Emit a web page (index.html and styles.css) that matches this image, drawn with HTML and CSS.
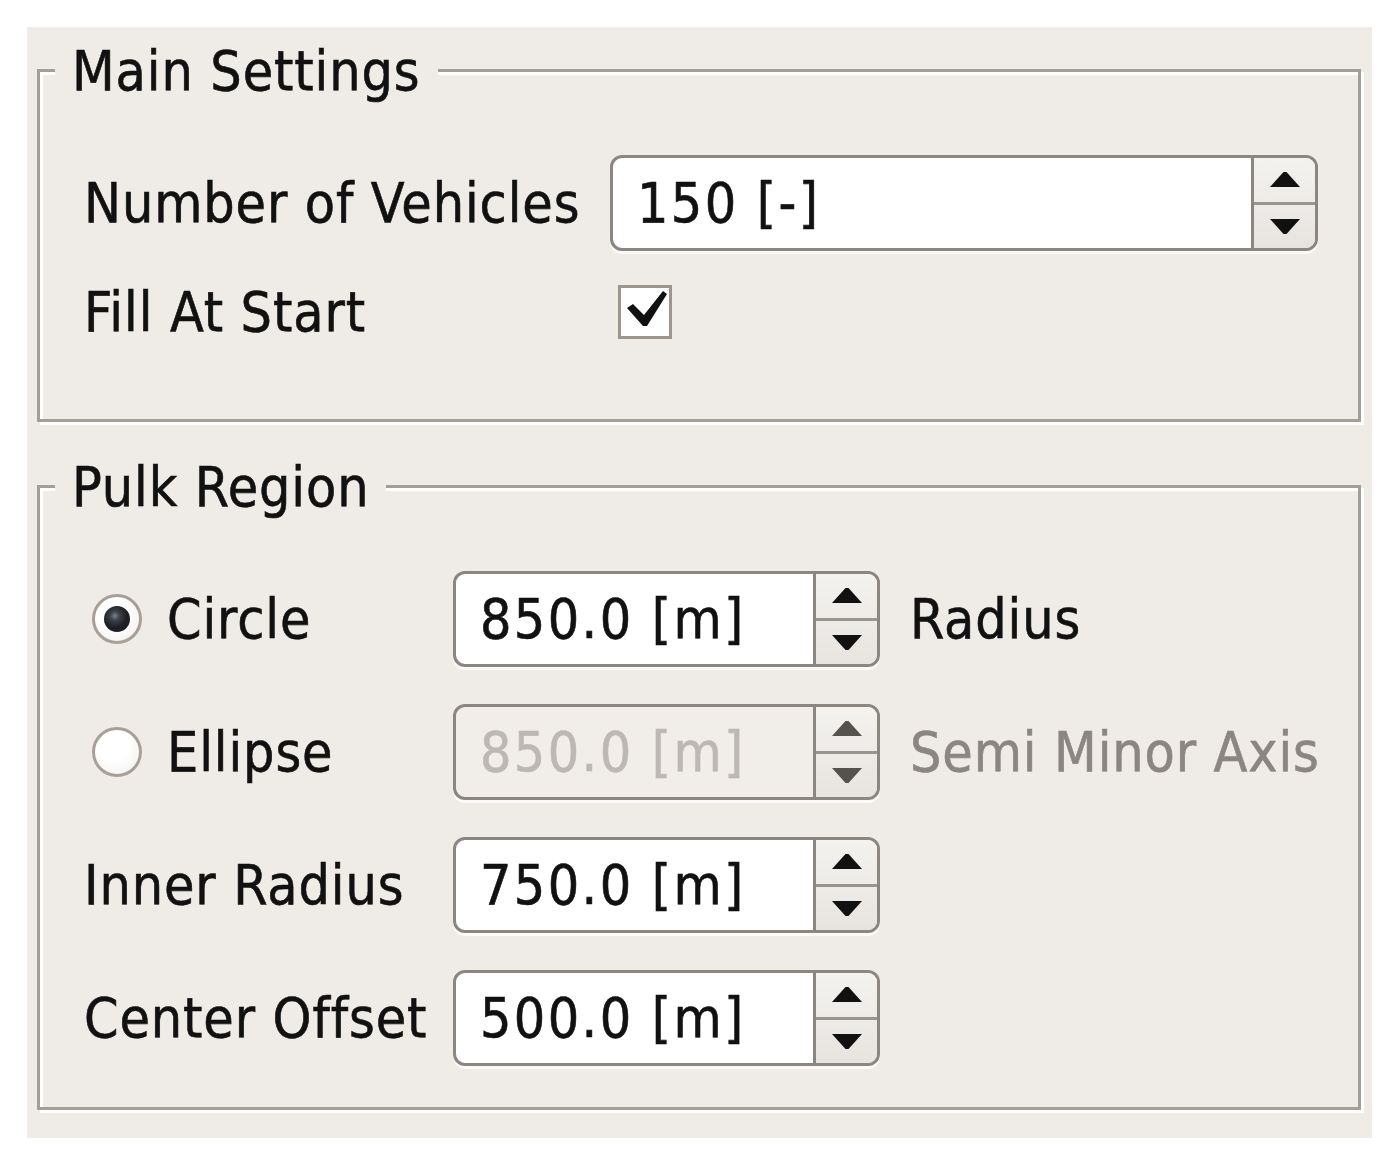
FILE: index.html
```html
<!DOCTYPE html>
<html lang="en">
<head>
    <meta charset="UTF-8">
    <meta name="viewport" content="width=device-width, initial-scale=1.0">
    <title>Pulk Settings</title>
    <link rel="stylesheet" href="styles.css">
</head>
<body>
    <div class="panel">

        <div class="group group-main">
            <div class="group-title">Main Settings</div>
            <div class="form form-main">
                <label class="field-label">Number of Vehicles</label>
                <div class="spinbox">
                    <div class="spin-value">150 [-]</div>
                    <div class="spin-buttons">
                        <div class="spin-btn"><svg class="arrow" viewBox="0 0 32 17"><polygon points="1,16 31,16 17.5,1 14.5,1"/></svg></div>
                        <div class="spin-btn"><svg class="arrow" viewBox="0 0 32 17"><polygon points="1,1 31,1 17.5,16 14.5,16"/></svg></div>
                    </div>
                </div>

                <label class="field-label">Fill At Start</label>
                <div class="checkbox-cell">
                    <span class="checkbox">
                        <svg class="check" viewBox="0 0 48 48"><path d="M6 20 L12 16 L23 27 L42 3 L46 6 L26 38 L22 38 Z"/></svg>
                    </span>
                </div>
            </div>
        </div>

        <div class="group group-region">
            <div class="group-title">Pulk Region</div>
            <div class="form form-region">
                <div class="radio-label"><span class="radio radio-checked"></span>Circle</div>
                <div class="spinbox">
                    <div class="spin-value">850.0 [m]</div>
                    <div class="spin-buttons">
                        <div class="spin-btn"><svg class="arrow" viewBox="0 0 32 17"><polygon points="1,16 31,16 17.5,1 14.5,1"/></svg></div>
                        <div class="spin-btn"><svg class="arrow" viewBox="0 0 32 17"><polygon points="1,1 31,1 17.5,16 14.5,16"/></svg></div>
                    </div>
                </div>
                <div class="suffix">Radius</div>

                <div class="radio-label"><span class="radio"></span>Ellipse</div>
                <div class="spinbox spinbox-disabled">
                    <div class="spin-value">850.0 [m]</div>
                    <div class="spin-buttons">
                        <div class="spin-btn"><svg class="arrow" viewBox="0 0 32 17"><polygon points="1,16 31,16 17.5,1 14.5,1"/></svg></div>
                        <div class="spin-btn"><svg class="arrow" viewBox="0 0 32 17"><polygon points="1,1 31,1 17.5,16 14.5,16"/></svg></div>
                    </div>
                </div>
                <div class="suffix suffix-disabled">Semi Minor Axis</div>

                <label class="field-label">Inner Radius</label>
                <div class="spinbox">
                    <div class="spin-value">750.0 [m]</div>
                    <div class="spin-buttons">
                        <div class="spin-btn"><svg class="arrow" viewBox="0 0 32 17"><polygon points="1,16 31,16 17.5,1 14.5,1"/></svg></div>
                        <div class="spin-btn"><svg class="arrow" viewBox="0 0 32 17"><polygon points="1,1 31,1 17.5,16 14.5,16"/></svg></div>
                    </div>
                </div>
                <div></div>

                <label class="field-label">Center Offset</label>
                <div class="spinbox">
                    <div class="spin-value">500.0 [m]</div>
                    <div class="spin-buttons">
                        <div class="spin-btn"><svg class="arrow" viewBox="0 0 32 17"><polygon points="1,16 31,16 17.5,1 14.5,1"/></svg></div>
                        <div class="spin-btn"><svg class="arrow" viewBox="0 0 32 17"><polygon points="1,1 31,1 17.5,16 14.5,16"/></svg></div>
                    </div>
                </div>
                <div></div>
            </div>
        </div>

    </div>
</body>
</html>
```

FILE: styles.css
```css
body {
    margin: 0;
    background-color: #fff;
    color: #111;
    font-family: "DejaVu Sans Condensed", "DejaVu Sans", sans-serif;
    font-stretch: condensed;
    font-size: 55px;
    letter-spacing: 0.9px;
    -webkit-text-stroke: 0.6px currentColor;
}

.panel {
    margin: 27px 0 0 27px;
    width: 1345px;
    box-sizing: border-box;
    padding: 42px 11px 28px 10px;
    background-color: #efebe6;
}

.group {
    border: 3px solid #a39e98;
    box-shadow: inset 3px 3px 0 #fff, 3px 3px 0 #fff;
    padding: 0 40px 77px 44px;
}

.group-region {
    margin-top: 63px;
    padding-bottom: 41px;
}

.group-title {
    width: fit-content;
    margin: -31px 0 0 -29px;
    padding: 0 17px;
    line-height: 60px;
    background-color: #efebe6;
    white-space: nowrap;
}

.form {
    display: grid;
    align-items: center;
    margin-top: 54px;
}

.form-main {
    grid-template-columns: 526px 708px;
    row-gap: 31px;
}

.form-region {
    grid-template-columns: 369px 427px 1fr;
    row-gap: 37px;
}

.field-label,
.suffix {
    line-height: 60px;
    white-space: nowrap;
}

.suffix {
    padding-left: 30px;
}

.suffix-disabled {
    color: #8b8680;
}

/* spin box */
.spinbox {
    display: flex;
    height: 96px;
    box-sizing: border-box;
    border: 3px solid #8c8680;
    border-radius: 12px;
    background-color: #fff;
    overflow: hidden;
    box-shadow: 0 3px 0 #fbfaf8;
}

.spin-value {
    flex: 1;
    display: flex;
    align-items: center;
    padding-left: 24px;
    letter-spacing: 2.4px;
    white-space: nowrap;
}

.spin-buttons {
    width: 64px;
    box-sizing: border-box;
    border-left: 3px solid #8c8680;
    display: flex;
    flex-direction: column;
    background: linear-gradient(#f4f2ef, #e7e4e0);
}

.spin-btn {
    flex: 1;
    display: flex;
    align-items: center;
    justify-content: center;
}

.spin-btn + .spin-btn {
    border-top: 3px solid #9a948e;
}

.arrow {
    width: 32px;
    height: 17px;
    fill: #111;
}

.spinbox-disabled {
    background-color: #f1eeea;
    color: #bdb8b2;
}

.spinbox-disabled .arrow {
    fill: #55524e;
}

/* check box */
.checkbox-cell {
    display: flex;
    padding-left: 8px;
}

.checkbox {
    width: 54px;
    height: 54px;
    box-sizing: border-box;
    border: 3px solid #9c968f;
    background-color: #fff;
    display: flex;
}

.check {
    width: 48px;
    height: 48px;
    fill: #111;
}

/* radio buttons */
.radio-label {
    display: flex;
    align-items: center;
    padding-left: 8px;
    line-height: 60px;
    white-space: nowrap;
}

.radio {
    flex-shrink: 0;
    width: 50px;
    height: 50px;
    box-sizing: border-box;
    margin-right: 25px;
    border: 3px solid #a89f97;
    border-radius: 50%;
    background: radial-gradient(circle at 40% 35%, #fff 40%, #f0ede9);
    display: flex;
    align-items: center;
    justify-content: center;
}

.radio-checked::after {
    content: "";
    width: 26px;
    height: 26px;
    border-radius: 50%;
    background: radial-gradient(circle at 42% 38%, #7b8189 0, #3a3f46 5px, #1c1f24 12px);
}
```
